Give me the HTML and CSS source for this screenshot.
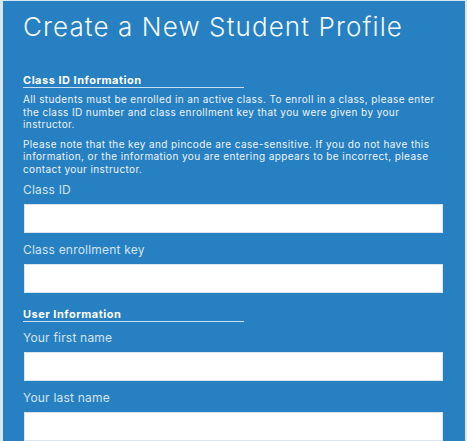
FILE: index.html
```html
<!DOCTYPE html>
<html lang="en">
<head>
<meta charset="utf-8">
<title>Create a New Student Profile</title>
<link rel="stylesheet" href="styles.css">
</head>
<body>
<main class="panel">
  <h1 class="title">Create a New Student Profile</h1>

  <h2 class="section-heading section-heading--first">Class ID Information</h2>
  <p class="note note--first">All students must be enrolled in an active class. To enroll in a class, please enter the class ID number and class enrollment key that you were given by your instructor.</p>
  <p class="note">Please note that the key and pincode are case-sensitive. If you do not have this information, or the information you are entering appears to be incorrect, please contact your instructor.</p>

  <div class="field field--first">
    <label class="field-label" for="classid">Class ID</label>
    <input class="field-input" id="classid" type="text">
  </div>
  <div class="field">
    <label class="field-label" for="classkey">Class enrollment key</label>
    <input class="field-input" id="classkey" type="text">
  </div>

  <h2 class="section-heading">User Information</h2>
  <div class="field field--after-heading">
    <label class="field-label" for="firstname">Your first name</label>
    <input class="field-input" id="firstname" type="text">
  </div>
  <div class="field">
    <label class="field-label" for="lastname">Your last name</label>
    <input class="field-input" id="lastname" type="text">
  </div>
</main>
</body>
</html>
```

FILE: styles.css
```css
html, body {
  margin: 0;
  padding: 0;
}

body {
  background: #d7e7f4;
  font-family: Inter, "Open Sans", "Liberation Sans", sans-serif;
  overflow: hidden;
}

.panel {
  margin: 1px 2px 0 3px;
  padding: 12px 21px 0 20px;
  background: #2680c2;
  min-height: 440px;
  box-sizing: border-box;
  color: #ffffff;
}

.title {
  margin: 0;
  font-size: 26px;
  line-height: 28px;
  font-weight: 300;
  letter-spacing: 1.1px;
  color: #f4f8fc;
}

.section-heading {
  width: 221px;
  margin: 15px 0 0;
  padding-bottom: 1px;
  font-size: 11px;
  line-height: 12px;
  font-weight: 700;
  letter-spacing: 0.5px;
  color: #ffffff;
  border-bottom: 1px solid rgba(255, 255, 255, 0.75);
}

.section-heading--first {
  margin-top: 33px;
}

.note {
  margin: 7px 0 0;
  padding-right: 4px;
  font-size: 10px;
  line-height: 12.5px;
  letter-spacing: 0.4px;
  color: #eef4fa;
}

.note--first {
  margin-top: 5px;
}

.field {
  margin-top: 10px;
}

.field--first {
  margin-top: 8px;
}

.field--after-heading {
  margin-top: 9px;
}

.field-label {
  display: block;
  font-size: 12px;
  line-height: 14px;
  letter-spacing: 0.2px;
  color: #d4e4f1;
}

.field-input {
  display: block;
  box-sizing: border-box;
  width: calc(100% - 2px);
  height: 29px;
  margin: 7px 1px 0;
  border: 1px solid #dbe5ee;
  background: #ffffff;
  outline: none;
}
```
